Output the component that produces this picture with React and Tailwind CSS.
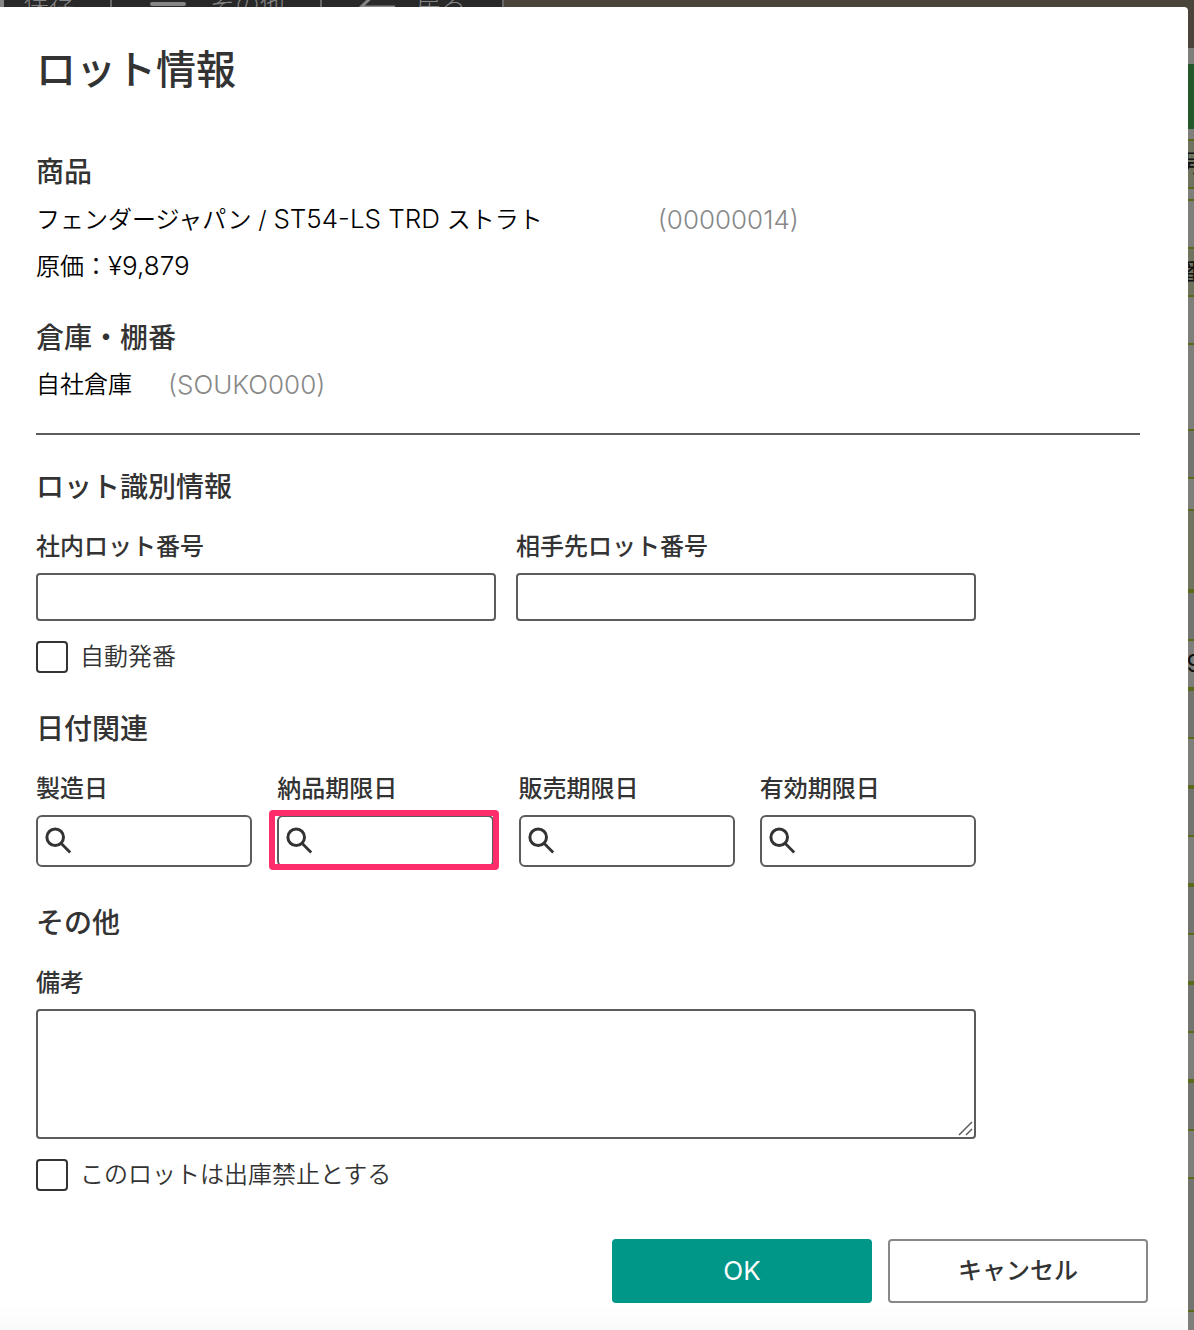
import { useState } from "react";
import clsx from "clsx";

const tableRows = [
  { height: "h-4" },
  { height: "h-[65px]", fill: "bg-[#23582a]" },
  { height: "h-3", line: "border-b-2" },
  { height: "h-12", line: "border-b-2", fill: "bg-[#70745f]", text: "号" },
  { height: "h-3", line: "border-b-2" },
  { height: "h-12", line: "border-b-2" },
  { height: "h-12", line: "border-b-2", fill: "bg-[#70745f]", text: "番" },
  { height: "h-12", line: "border-b-2" },
  { height: "h-[86px]", line: "border-b-2" },
  { height: "h-12", line: "border-b-2", fill: "bg-[#747370]" },
  { height: "h-8", line: "border-b-2" },
  { height: "h-[82px]", line: "border-b-4", fill: "bg-[#70745f]" },
  { height: "h-12", line: "border-b-2", fill: "bg-[#747370]" },
  { height: "h-[50px]", line: "border-b-4", text: "9" },
  { height: "h-12", line: "border-b-2", fill: "bg-[#747370]" },
  { height: "h-[50px]", line: "border-b-4" },
  { height: "h-12", line: "border-b-2", fill: "bg-[#747370]" },
  { height: "h-[50px]", line: "border-b-4" },
  { height: "h-12", line: "border-b-2", fill: "bg-[#747370]" },
  { height: "h-[50px]", line: "border-b-4" },
  { height: "h-12", line: "border-b-2", fill: "bg-[#747370]" },
  { height: "h-[50px]", line: "border-b-4" },
  { height: "h-12", line: "border-b-2", fill: "bg-[#747370]" },
  { height: "h-12", line: "border-b-2" },
  { height: "h-[133px]", line: "border-b-2", fill: "bg-[#747370]" },
];

const dateFields = [
  { id: "manufactured", label: "製造日" },
  { id: "delivery", label: "納品期限日", highlighted: true },
  { id: "sales", label: "販売期限日" },
  { id: "expiry", label: "有効期限日" },
];

function SearchIcon() {
  return (
    <svg viewBox="0 0 28 28" className="pointer-events-none absolute left-2 top-3 size-7" fill="none" stroke="#333" aria-hidden="true">
      <circle cx="11.2" cy="10.2" r="8.3" strokeWidth="3" />
      <path d="M17 16.2 26.2 25.4" strokeWidth="2.8" />
    </svg>
  );
}

function Backdrop() {
  return (
    <div className="absolute inset-0 overflow-hidden bg-[#7f7e7b]" aria-hidden="true">
      <div className="flex h-12 items-start bg-[#4b443b] text-[25px] font-light leading-6 text-[#858585]">
        <div className="-mt-2 flex h-14 bg-[#292929]">
          <div className="w-28 border-l-4 border-r-2 border-l-[#858585] border-r-[#666] pl-5">保存</div>
          <div className="flex w-[210px] border-r-2 border-[#666] pl-[38px]">
            <span className="mt-2.5 h-1 w-9 rounded-full bg-[#858585]" />
            <span className="pl-6">その他</span>
          </div>
          <div className="flex w-[182px] border-r-2 border-[#666] pl-9">
            <svg viewBox="0 0 38 30" className="h-[30px] w-[38px]" fill="none" stroke="#858585" strokeWidth="3">
              <path d="M18 1 3 15l15 14M3 15h34" />
            </svg>
            <span className="pl-5">戻る</span>
          </div>
        </div>
      </div>
      <div className="flex flex-col">
        {tableRows.map((row, i) => (
          <div
            key={i}
            className={clsx("flex shrink-0 items-center justify-end overflow-hidden border-[#596a1c] text-2xl text-[#111]", row.height, row.line, row.fill)}
          >
            {row.text && <span className="-mr-3 w-6 text-center">{row.text}</span>}
          </div>
        ))}
      </div>
    </div>
  );
}

function SectionTitle({ children }) {
  return <h2 className="text-[28px] font-medium leading-10 text-[#333]">{children}</h2>;
}

function TextField({ id, label }) {
  return (
    <div className="flex-1">
      <label htmlFor={id} className="block text-2xl font-medium leading-9">
        {label}
      </label>
      <input id={id} type="text" className="mt-2 block h-12 w-full rounded border-2 border-[#5c5c5c] px-3 text-2xl" />
    </div>
  );
}

function DateField({ id, label, highlighted }) {
  return (
    <div className="flex-1">
      <label htmlFor={id} className="block text-2xl font-medium leading-9">
        {label}
      </label>
      <div className="relative mt-2">
        <input id={id} type="text" className="block h-[52px] w-full rounded-md border-2 border-[#5c5c5c] pl-11 pr-2 text-2xl" />
        <SearchIcon />
        {highlighted && (
          <span className="pointer-events-none absolute -bottom-[3px] -left-2 -right-[5px] -top-[5px] rounded-sm border-6 border-[#ff2d6b]" />
        )}
      </div>
    </div>
  );
}

function CheckField({ label, checked, onChange }) {
  return (
    <label className="flex w-fit items-center gap-3 text-2xl font-[350] leading-8">
      <input
        type="checkbox"
        checked={checked}
        onChange={onChange}
        className="size-8 appearance-none rounded border-2 border-[#333] bg-white checked:bg-[#009688]"
      />
      {label}
    </label>
  );
}

export default function App() {
  const [autoNumber, setAutoNumber] = useState(false);
  const [blocked, setBlocked] = useState(false);

  return (
    <div className="relative min-h-screen overflow-hidden font-['Inter','Noto_Sans_CJK_JP',sans-serif]">
      <Backdrop />
      <div className="relative flex min-h-screen flex-col pr-1.5 pt-[7px]">
        <main
          role="dialog"
          aria-labelledby="lot-title"
          className="flex-1 rounded-tr bg-linear-to-b from-white from-98% to-[#fafafa] pb-6 pl-9 pr-10 pt-[33px] text-[#333]"
        >
          <h1 id="lot-title" className="text-[40px] font-medium leading-[60px]">
            ロット情報
          </h1>

          <section className="mt-[52px]">
            <SectionTitle>商品</SectionTitle>
            <p className="mt-1 flex items-center text-2xl font-[350] leading-[46px] text-black">
              <span>
                フェンダージャパン / <span className="text-[26px]">ST54-LS TRD</span> ストラト
              </span>
              <span className="ml-[115px] text-[26px] font-light text-[#888]">(00000014)</span>
            </p>
            <p className="text-2xl font-[350] leading-[46px] text-black">
              原価：<span className="text-[26px]">¥9,879</span>
            </p>
          </section>

          <section className="mt-7">
            <SectionTitle>倉庫・棚番</SectionTitle>
            <p className="mt-1 flex items-center text-2xl font-[350] leading-[46px] text-black">
              自社倉庫
              <span className="ml-9 text-[26px] font-light text-[#888]">(SOUKO000)</span>
            </p>
          </section>

          <hr className="mr-2 mt-[25px] border-t-2 border-[#5c5c5c]" />

          <section className="mt-8 max-w-[940px]">
            <SectionTitle>ロット識別情報</SectionTitle>
            <div className="mt-[22px] flex gap-5">
              <TextField id="own-lot" label="社内ロット番号" />
              <TextField id="partner-lot" label="相手先ロット番号" />
            </div>
            <div className="mt-5">
              <CheckField label="自動発番" checked={autoNumber} onChange={(e) => setAutoNumber(e.target.checked)} />
            </div>
          </section>

          <section className="mt-9 max-w-[940px]">
            <SectionTitle>日付関連</SectionTitle>
            <div className="mt-[22px] flex gap-[25px]">
              {dateFields.map((field) => (
                <DateField key={field.id} {...field} />
              ))}
            </div>
          </section>

          <section className="mt-9 max-w-[940px]">
            <SectionTitle>その他</SectionTitle>
            <label htmlFor="remarks" className="mt-[22px] block text-2xl font-medium leading-9">
              備考
            </label>
            <div className="relative mt-2">
              <textarea id="remarks" className="block h-[130px] w-full resize-none rounded border-2 border-[#5c5c5c] p-3 text-2xl" />
              <svg viewBox="0 0 16 16" className="pointer-events-none absolute bottom-0.5 right-0.5 size-4" stroke="#5c5c5c" strokeWidth="1.5" aria-hidden="true">
                <path d="M1 14 14 1M8 14l6-6" />
              </svg>
            </div>
            <div className="mt-5">
              <CheckField label="このロットは出庫禁止とする" checked={blocked} onChange={(e) => setBlocked(e.target.checked)} />
            </div>
          </section>

          <div className="mt-12 flex justify-end gap-4 text-2xl font-medium">
            <button type="button" className="h-16 w-[260px] rounded bg-[#009688] text-[26px] font-normal text-white">
              OK
            </button>
            <button type="button" className="h-16 w-[260px] rounded border-2 border-[#888] bg-white">
              キャンセル
            </button>
          </div>
        </main>
      </div>
    </div>
  );
}
